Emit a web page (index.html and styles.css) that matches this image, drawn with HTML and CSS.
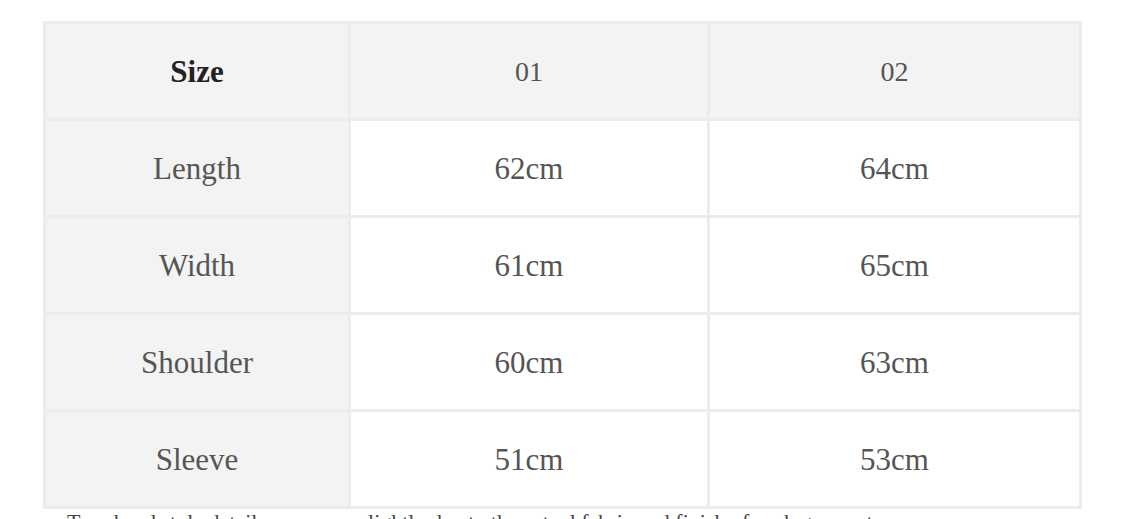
FILE: index.html
```html
<!DOCTYPE html>
<html>
<head>
<meta charset="utf-8">
<link rel="stylesheet" href="styles.css">
</head>
<body>
<div class="wrap">
  <table class="size-table">
    <colgroup>
      <col class="c1"><col class="c2"><col class="c3">
    </colgroup>
    <tr class="head">
      <th class="label strong">Size</th>
      <th>01</th>
      <th>02</th>
    </tr>
    <tr><td class="label">Length</td><td>62cm</td><td>64cm</td></tr>
    <tr><td class="label">Width</td><td>61cm</td><td>65cm</td></tr>
    <tr><td class="label">Shoulder</td><td>60cm</td><td>63cm</td></tr>
    <tr><td class="label">Sleeve</td><td>51cm</td><td>53cm</td></tr>
  </table>
  <p class="note">Trend and style details may vary slightly due to the actual fabric and finish of each garment.</p>
</div>
</body>
</html>
```
FILE: styles.css
```css
html, body {
  margin: 0;
  padding: 0;
  background: #fff;
}
body {
  font-family: "Liberation Serif", "DejaVu Serif", serif;
  overflow: hidden;
}
.wrap {
  padding: 21px 0 0 43px;
  width: 1038px;
}
.size-table {
  width: 1036px;
  border-collapse: collapse;
  table-layout: fixed;
  border: 3px solid #ececec;
}
.c1 { width: 305px; }
.c2 { width: 359px; }
.c3 { width: 372px; }
.size-table th,
.size-table td {
  border: 3px solid #ececec;
  height: 97px;
  padding: 1px 0 0;
  box-sizing: border-box;
  text-align: center;
  vertical-align: middle;
  font-size: 31px;
  font-weight: normal;
  color: #555;
}
.head th {
  background: #f3f3f3;
  font-size: 28px;
  color: #555;
}
.head th.strong {
  font-weight: bold;
  font-size: 31px;
  color: #222;
}
.label {
  background: #f3f3f3;
}
.note {
  margin: 0 0 0 24px;
  font-size: 22px;
  line-height: 26px;
  color: #444;
  white-space: nowrap;
}
```
